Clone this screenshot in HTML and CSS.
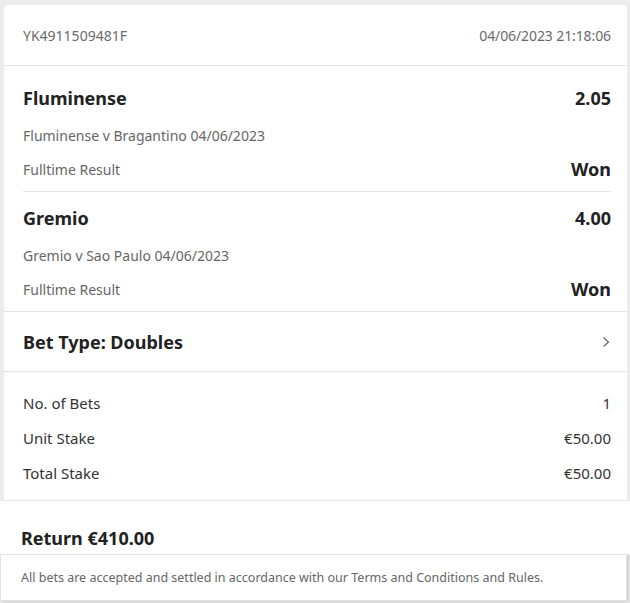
FILE: index.html
```html
<!DOCTYPE html>
<html>
<head>
<meta charset="utf-8">
<link rel="stylesheet" href="styles.css">
</head>
<body>
<div class="card">
  <div class="header">
    <span class="ref">YK4911509481F</span>
    <span class="date">04/06/2023 21:18:06</span>
  </div>
  <div class="selections">
    <div class="selection first">
      <div class="row name-row"><span class="name">Fluminense</span><span class="odds">2.05</span></div>
      <div class="row sub-row"><span class="sub">Fluminense v Bragantino 04/06/2023</span></div>
      <div class="row market-row"><span class="sub">Fulltime Result</span><span class="result">Won</span></div>
    </div>
    <div class="selection">
      <div class="row name-row"><span class="name">Gremio</span><span class="odds">4.00</span></div>
      <div class="row sub-row"><span class="sub">Gremio v Sao Paulo 04/06/2023</span></div>
      <div class="row market-row"><span class="sub">Fulltime Result</span><span class="result">Won</span></div>
    </div>
  </div>
  <div class="bettype">
    <span class="bettype-label">Bet Type: Doubles</span>
    <svg class="chevron" width="8" height="12" viewBox="0 0 8 12"><polyline points="1.5,1.5 6.5,6 1.5,10.5" fill="none" stroke="#666" stroke-width="1.2"/></svg>
  </div>
  <div class="stakes">
    <div class="stake-row"><span>No. of Bets</span><span>1</span></div>
    <div class="stake-row"><span>Unit Stake</span><span>€50.00</span></div>
    <div class="stake-row"><span>Total Stake</span><span>€50.00</span></div>
  </div>
</div>
<div class="return">
  <span class="return-text">Return €410.00</span>
</div>
<div class="footer">
  <span class="footer-text">All bets are accepted and settled in accordance with our Terms and Conditions and Rules.</span>
</div>
</body>
</html>
```
FILE: styles.css
```css
* { box-sizing: border-box; }
html, body { margin: 0; padding: 0; }
body {
  background: #ececec;
  font-family: "Noto Sans", "Open Sans", sans-serif;
  color: #222;
  width: 630px;
  height: 603px;
  overflow: hidden;
}
.card {
  margin: 5px 3px 0 4px;
  background: #fff;
  border-radius: 4px 4px 0 0;
}
.header {
  height: 61px;
  display: flex;
  justify-content: space-between;
  align-items: center;
  padding: 0 16px 0 19px;
  border-bottom: 1px solid #e4e4e4;
  font-size: 14px;
  color: #6a6a6a;
}
.date { letter-spacing: -0.1px; }
.selections {
  padding: 0 16px 0 19px;
}
.selection {
  padding: 11px 0 10px;
  border-bottom: 1px solid #e4e4e4;
}
.selection.first { padding-top: 17px; }
.selection:last-child { border-bottom: none; }
.row {
  display: flex;
  justify-content: space-between;
  align-items: center;
}
.name-row { height: 30px; }
.sub-row { height: 20px; margin-top: 12px; }
.market-row { height: 24px; margin-top: 12px; }
.name, .odds, .result {
  font-size: 18px;
  font-weight: 700;
  color: #222;
}
.sub {
  font-size: 14px;
  color: #666;
}
.bettype {
  height: 61px;
  display: flex;
  justify-content: space-between;
  align-items: center;
  padding: 0 17px 0 19px;
  border-top: 1px solid #e4e4e4;
  border-bottom: 1px solid #e4e4e4;
}
.bettype-label {
  font-size: 18px;
  font-weight: 700;
  color: #222;
}
.chevron { display: block; }
.stakes {
  padding: 13px 16px 10px 19px;
  border-bottom: 1px solid #e4e4e4;
}
.stake-row {
  height: 35px;
  display: flex;
  justify-content: space-between;
  align-items: center;
  font-size: 15px;
  color: #333;
}
.return {
  background: #fff;
  height: 53px;
  padding: 25px 0 0 21px;
}
.return-text {
  display: block;
  line-height: 24px;
  font-size: 18px;
  font-weight: 700;
  color: #222;
}
.footer {
  width: 627px;
  height: 47px;
  background: #fff;
  border: 1px solid #e2e2e2;
  box-shadow: 2px 1px 2px rgba(0,0,0,0.12);
  display: flex;
  align-items: center;
  padding-left: 20px;
}
.footer-text {
  font-size: 12.5px;
  color: #666;
}
```
